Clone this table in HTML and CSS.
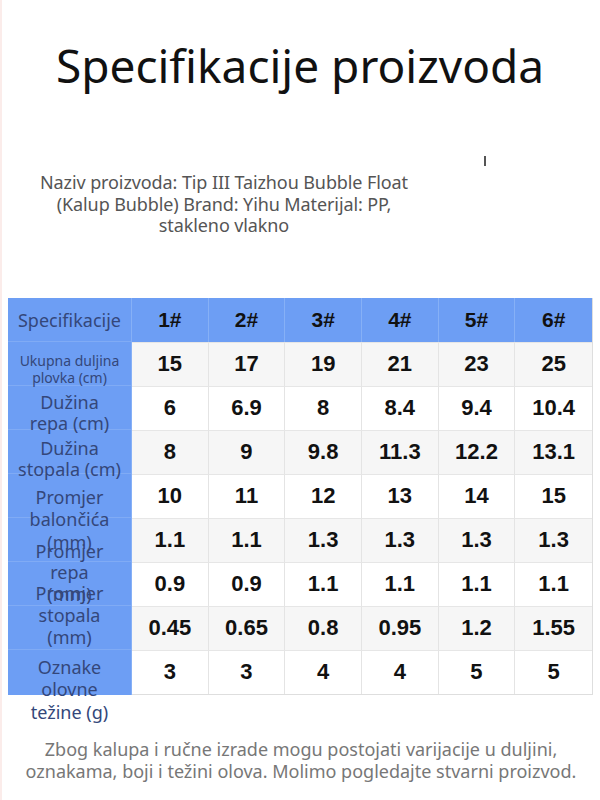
FILE: index.html
```html
<!DOCTYPE html>
<html lang="hr">
<head>
<meta charset="utf-8">
<title>Specifikacije proizvoda</title>
<link rel="stylesheet" href="styles.css">
</head>
<body>
<div class="page">
  <h1 class="title">Specifikacije proizvoda</h1>
  <span class="tick"></span>
  <p class="desc">Naziv proizvoda: Tip III Taizhou Bubble Float<br>(Kalup Bubble) Brand: Yihu Materijal: PP,<br>stakleno vlakno</p>

  <div class="spec">
    <div class="labels">
      <div class="lab lab-head">Specifikacije</div>
      <div class="lab lab-small">Ukupna duljina<br>plovka (cm)</div>
      <div class="lab lab-r2">Dužina<br>repa (cm)</div>
      <div class="lab lab-r3">Dužina<br>stopala (cm)</div>
      <div class="lab lab-r4">Promjer<br>balončića<br>(mm)</div>
      <div class="lab lab-r5">Promjer<br>repa<br>(mm)</div>
      <div class="lab lab-r6">Promjer<br>stopala<br>(mm)</div>
      <div class="lab"></div>
      <div class="lab lab-r8">Oznake<br>olovne<br>težine (g)</div>
    </div>
    <div class="data">
      <div class="h">1#</div><div class="h">2#</div><div class="h">3#</div><div class="h">4#</div><div class="h">5#</div><div class="h">6#</div>
      <div class="c g">15</div><div class="c g">17</div><div class="c g">19</div><div class="c g">21</div><div class="c g">23</div><div class="c g">25</div>
      <div class="c">6</div><div class="c">6.9</div><div class="c">8</div><div class="c">8.4</div><div class="c">9.4</div><div class="c">10.4</div>
      <div class="c g">8</div><div class="c g">9</div><div class="c g">9.8</div><div class="c g">11.3</div><div class="c g">12.2</div><div class="c g">13.1</div>
      <div class="c">10</div><div class="c">11</div><div class="c">12</div><div class="c">13</div><div class="c">14</div><div class="c">15</div>
      <div class="c g">1.1</div><div class="c g">1.1</div><div class="c g">1.3</div><div class="c g">1.3</div><div class="c g">1.3</div><div class="c g">1.3</div>
      <div class="c">0.9</div><div class="c">0.9</div><div class="c">1.1</div><div class="c">1.1</div><div class="c">1.1</div><div class="c">1.1</div>
      <div class="c g">0.45</div><div class="c g">0.65</div><div class="c g">0.8</div><div class="c g">0.95</div><div class="c g">1.2</div><div class="c g">1.55</div>
      <div class="c">3</div><div class="c">3</div><div class="c">4</div><div class="c">4</div><div class="c">5</div><div class="c">5</div>
    </div>
  </div>

  <p class="note">Zbog kalupa i ručne izrade mogu postojati varijacije u duljini,<br>oznakama, boji i težini olova. Molimo pogledajte stvarni proizvod.</p>
</div>
</body>
</html>
```

FILE: styles.css
```css
* { box-sizing: border-box; }
html, body { margin: 0; padding: 0; background: #fff; }
body { font-family: "Noto Sans", "Open Sans", sans-serif; }

.page {
  position: relative;
  width: 600px;
  height: 800px;
  overflow: hidden;
  border-left: 2px solid #fbecea;
}

.title {
  margin: 0;
  padding-top: 38px;
  font-weight: 400;
  font-size: 46px;
  line-height: 55px;
  text-align: center;
  color: #111;
  margin-left: -2px;
}

.tick {
  position: absolute;
  left: 482px;
  top: 156px;
  width: 1.5px;
  height: 10px;
  background: #555;
}

.desc {
  margin: 79px 0 0 0;
  width: 444px;
  font-size: 18px;
  line-height: 21.5px;
  letter-spacing: -0.1px;
  color: #555;
  text-align: center;
}

.spec {
  display: flex;
  margin: 61px 0 0 6px;
  width: 585px;
}

.labels {
  width: 124px;
  flex: none;
  background: #6d9ef4;
  color: #34477a;
  text-align: center;
  border-right: 1px solid #86b0f6;
}

.lab {
  height: 44px;
  font-size: 18px;
  line-height: 21px;
  border-bottom: 1px solid #80abf5;
}
.lab:last-child { border-bottom: none; }
.lab-head { line-height: 44px; }
.lab-small { font-size: 14px; line-height: 17px; padding-top: 10px; }
.lab-r2 { padding-top: 6px; }
.lab-r3 { padding-top: 8px; }
.lab-r4 { padding-top: 12px; line-height: 22.5px; }
.lab-r5 { padding-top: 23px; line-height: 21.5px; }
.lab-r6 { padding-top: 20px; line-height: 22px; }
.lab-r8 { padding-top: 6px; line-height: 22.5px; }

.data {
  flex: 1;
  display: grid;
  grid-template-columns: repeat(6, 1fr);
  grid-auto-rows: 44px;
  font-family: "Liberation Sans", Arial, sans-serif;
  font-weight: 700;
  color: #111;
  border-right: 1px solid #dedede;
  border-bottom: 1px solid #dedede;
}

.h, .c {
  display: flex;
  align-items: center;
  justify-content: center;
}

.h {
  background: #6d9ef4;
  font-size: 21px;
  border-right: 1px solid #86b0f6;
}
.h:nth-child(6) { border-right: none; }

.c {
  background: #fff;
  font-size: 22px;
  border-right: 1px solid #e4e4e4;
  border-top: 1px solid #e6e6e6;
}
.c:nth-child(6n) { border-right: none; }
.c.g { background: #f6f6f6; }

.note {
  margin: 43px 0 0 0;
  font-size: 18px;
  line-height: 22px;
  color: #777;
  text-align: center;
}
```
